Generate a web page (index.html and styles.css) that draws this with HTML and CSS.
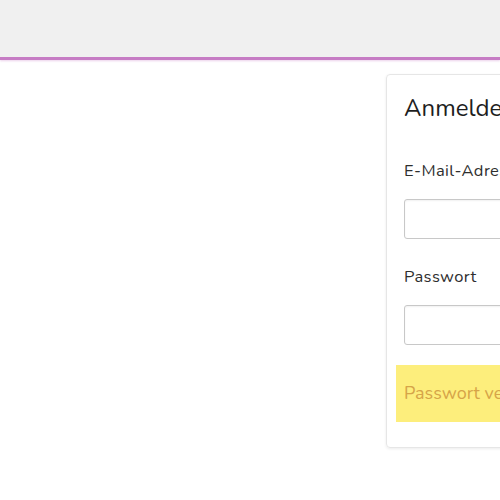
FILE: index.html
```html
<!DOCTYPE html>
<html lang="de">
<head>
<meta charset="utf-8">
<title>Anmelden</title>
<link rel="stylesheet" href="styles.css">
</head>
<body>
<header class="topbar"></header>
<main class="main">
  <section class="card">
    <h1 class="card-title">Anmelden</h1>
    <div class="field field-first">
      <label class="label" for="email">E-Mail-Adresse</label>
      <input class="input" id="email" type="email">
    </div>
    <div class="field field-second">
      <label class="label" for="pw">Passwort</label>
      <input class="input" id="pw" type="password">
    </div>
    <div class="notice">Passwort vergessen?</div>
  </section>
</main>
</body>
</html>
```
FILE: styles.css
```css
html, body {
  margin: 0;
  padding: 0;
  background: #ffffff;
  overflow: hidden;
  width: 500px;
  height: 500px;
}
body {
  font-family: "Nunito", "Lato", "Open Sans", sans-serif;
  color: #2a2a2a;
}
.topbar {
  height: 57px;
  background: #f0f0f0;
  border-bottom: 3px solid #c67cc4;
  box-shadow: 0 1px 2px rgba(198, 124, 196, 0.35);
}
.main {
  display: flex;
  padding: 14px 0 0 386px;
}
.card {
  flex: 0 0 320px;
  box-sizing: border-box;
  height: 374px;
  border: 1px solid #e6e6e6;
  border-radius: 4px;
  box-shadow: 0 1px 3px rgba(0, 0, 0, 0.08);
  padding: 16px 0 0 9px;
  display: flex;
  flex-direction: column;
}
.card-title {
  margin: 0 0 0 8px;
  font-size: 24px;
  font-weight: 400;
  line-height: 34px;
  color: #1e1e1e;
}
.field {
  display: flex;
  flex-direction: column;
  margin: 0 0 0 8px;
}
.field-first {
  margin-top: 35px;
}
.field-second {
  margin-top: 27px;
}
.label {
  font-size: 16.5px;
  line-height: 22px;
  letter-spacing: 0.4px;
  color: #2e2e2e;
  margin-bottom: 17px;
}
.input {
  box-sizing: border-box;
  height: 40px;
  border: 1px solid #c8c8c8;
  border-radius: 3px;
  box-shadow: inset 0 1px 2px rgba(0,0,0,0.06);
  background: #fff;
  width: 100%;
}
.notice {
  margin-top: 20px;
  background: #fdee7c;
  color: #d6a448;
  font-size: 18px;
  line-height: 57px;
  height: 57px;
  padding-left: 8px;
}
```
